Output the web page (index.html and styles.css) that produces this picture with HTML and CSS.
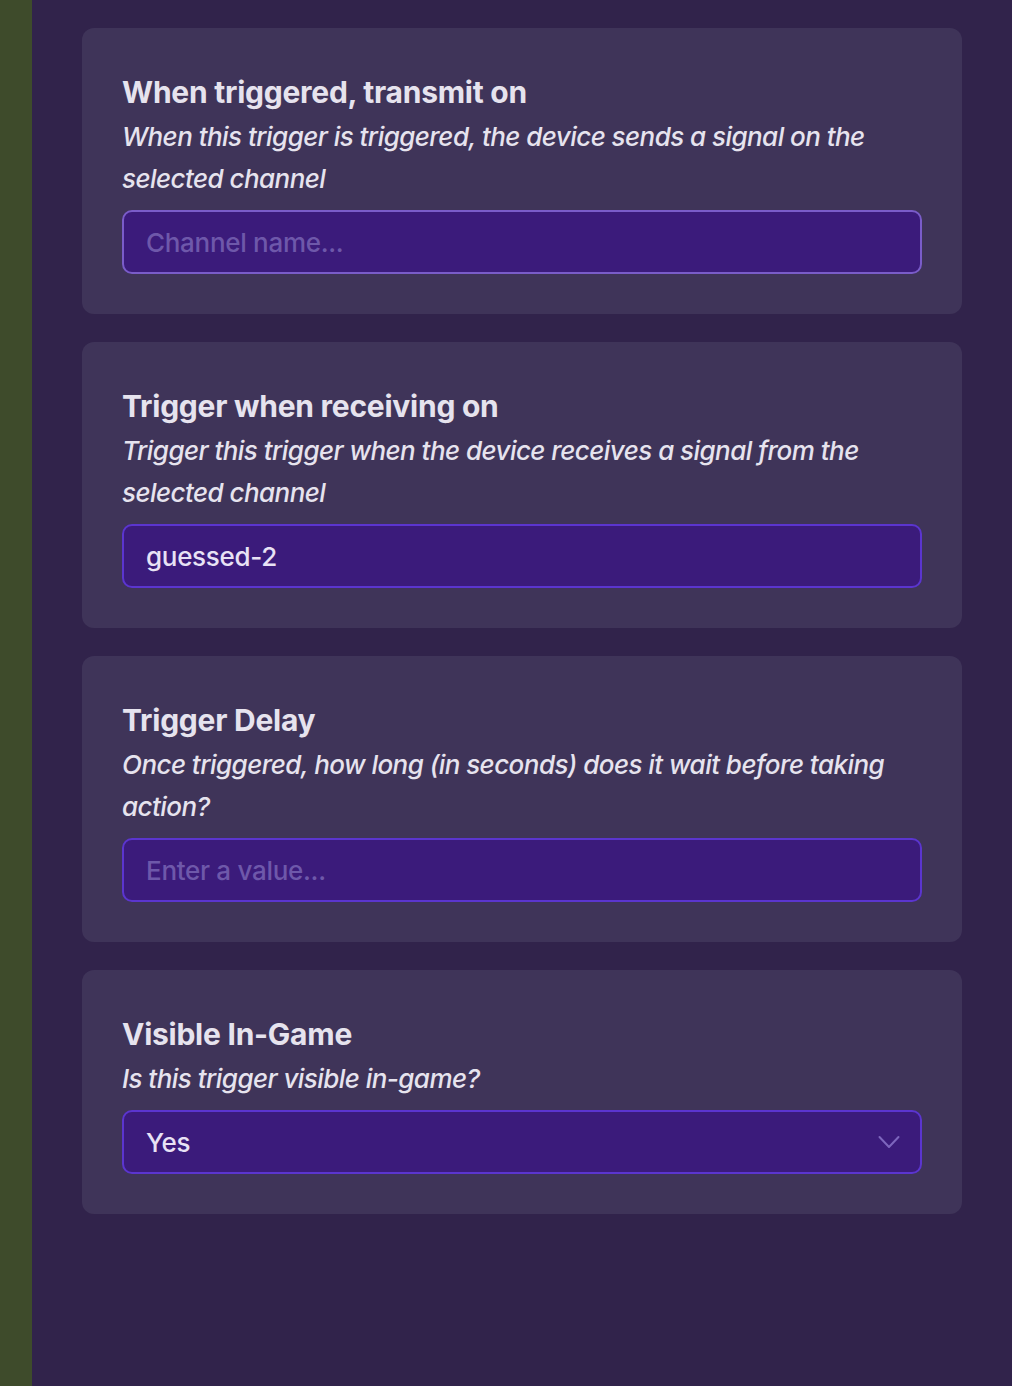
FILE: index.html
```
<!DOCTYPE html>
<html lang="en">
<head>
    <meta charset="UTF-8">
    <meta name="viewport" content="width=device-width, initial-scale=1.0">
    <title>Trigger Settings</title>
    <link rel="stylesheet" href="styles.css">
</head>
<body>
    <div class="page">
        <div class="world-strip"></div>

        <div class="panel">
            <div class="option-card">
                <div class="option-title">When triggered, transmit on</div>
                <div class="option-desc">When this trigger is triggered, the device sends a signal on the selected channel</div>
                <input class="field field-focus" type="text" placeholder="Channel name...">
            </div>

            <div class="option-card">
                <div class="option-title">Trigger when receiving on</div>
                <div class="option-desc">Trigger this trigger when the device receives a signal from the selected channel</div>
                <input class="field" type="text" value="guessed-2">
            </div>

            <div class="option-card">
                <div class="option-title">Trigger Delay</div>
                <div class="option-desc">Once triggered, how long (in seconds) does it wait before taking action?</div>
                <input class="field" type="text" placeholder="Enter a value...">
            </div>

            <div class="option-card">
                <div class="option-title">Visible In-Game</div>
                <div class="option-desc">Is this trigger visible in-game?</div>
                <div class="field select-field">
                    <span>Yes</span>
                    <svg class="chevron" width="22" height="14" viewBox="0 0 22 14" fill="none">
                        <path d="M1.5 2 L11 12 L20.5 2" stroke="#7d66bd" stroke-width="2" stroke-linecap="round" stroke-linejoin="round"/>
                    </svg>
                </div>
            </div>
        </div>
    </div>
</body>
</html>
```

FILE: styles.css
```
body, html {
    margin: 0;
    padding: 0;
    height: 100%;
    width: 100%;
    font-family: Inter, "Noto Sans", sans-serif;
    background-color: #31234b;
    overflow: hidden;
}

.page {
    display: flex;
    height: 100vh;
    width: 100%;
}

/* left edge of the game world */
.world-strip {
    width: 32px;
    flex-shrink: 0;
    background-color: #3e4b2b;
}

.panel {
    flex-grow: 1;
    display: flex;
    flex-direction: column;
    gap: 28px;
    padding: 28px 50px 0 50px;
    box-sizing: border-box;
}

.option-card {
    background-color: #3f3459;
    border-radius: 12px;
    padding: 40px;
    display: flex;
    flex-direction: column;
}

.option-title {
    font-size: 30px;
    font-weight: 700;
    line-height: 48px;
    letter-spacing: -0.25px;
    color: #e6e3ee;
}

.option-desc {
    font-size: 26px;
    font-style: italic;
    font-weight: 500;
    line-height: 42px;
    letter-spacing: -0.55px;
    color: #e6e3ee;
    margin-bottom: 10px;
}

.field {
    height: 64px;
    box-sizing: border-box;
    width: 100%;
    border: 2px solid #5b35cf;
    border-radius: 10px;
    background-color: #3b1b7b;
    padding: 0 22px;
    font-family: Inter, "Noto Sans", sans-serif;
    font-size: 26px;
    font-weight: 500;
    letter-spacing: -0.3px;
    color: #e8e2f5;
    outline: none;
}

.field::placeholder {
    color: #6e58aa;
}

.field-focus {
    border-color: #7a5cc9;
}

.select-field {
    display: flex;
    align-items: center;
    justify-content: space-between;
}

.chevron {
    margin-right: -2px;
}
```
